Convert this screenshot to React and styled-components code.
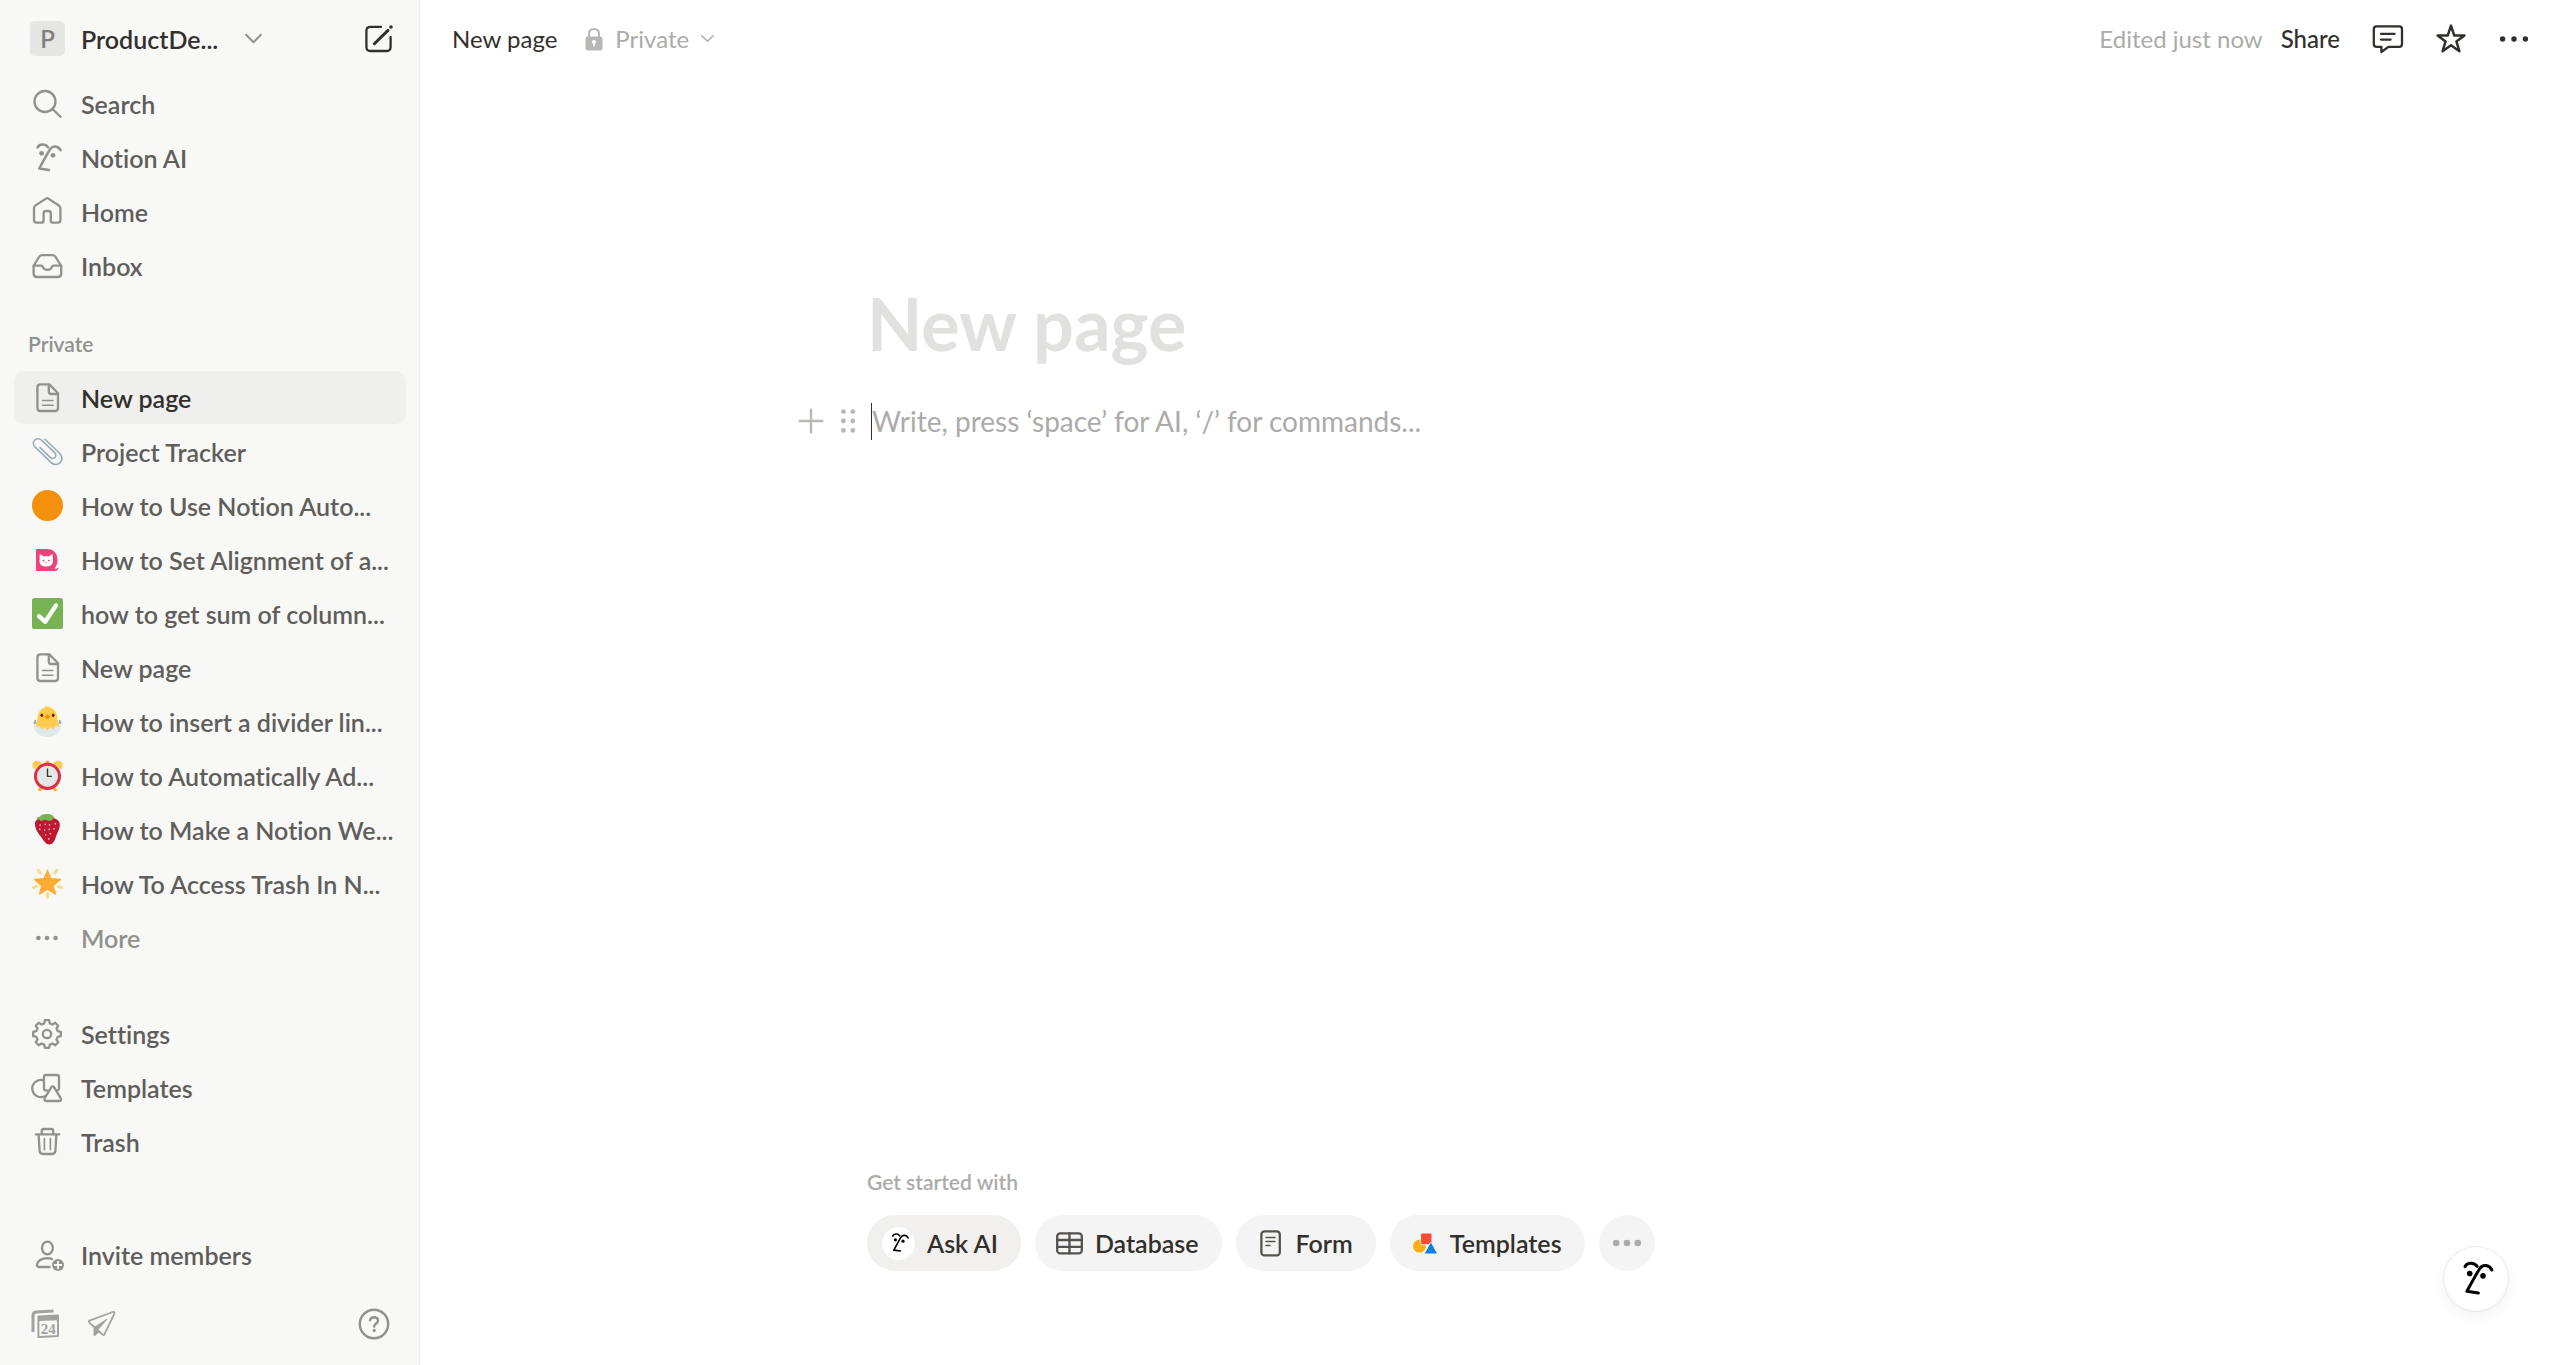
// App.jsx
import React, { useState } from 'react';
import styled, { createGlobalStyle } from 'styled-components';

const GlobalStyle = createGlobalStyle`
  * {
    box-sizing: border-box;
  }

  body {
    margin: 0;
    background: #ffffff;
    color: #32302c;
    font-family: Lato, 'Open Sans', sans-serif;
    font-size: 25px;
    font-variant-ligatures: none;
  }

  button,
  input {
    font: inherit;
    color: inherit;
  }
`;

const Layout = styled.div`
  display: flex;
  min-height: 100vh;
`;

const Sidebar = styled.aside`
  display: flex;
  flex-direction: column;
  flex: 0 0 420px;
  min-width: 0;
  background: #f8f8f7;
  border-right: 1px solid #eeeeec;
`;

const SidebarHeader = styled.div`
  display: flex;
  align-items: center;
  justify-content: space-between;
  height: 77px;
  padding: 0 22px 0 30px;
`;

const WorkspaceButton = styled.button`
  display: flex;
  align-items: center;
  padding: 0;
  border: none;
  background: none;
  font-weight: 600;
  cursor: pointer;
`;

const WorkspaceName = styled.span`
  margin-right: 17px;
`;

const WorkspaceBadge = styled.span`
  width: 35px;
  height: 35px;
  margin-right: 16px;
  border-radius: 5px;
  background: #e6e6e4;
  color: #80807d;
  font-size: 24px;
  line-height: 36px;
  text-align: center;
`;

const IconButton = styled.button`
  display: flex;
  padding: 0;
  border: none;
  background: none;
  color: ${(props) => props.$color || '#32302c'};
  cursor: pointer;
`;

const Section = styled.ul`
  display: flex;
  flex-direction: column;
  gap: 1px;
  margin: ${(props) => props.$margin || '0'};
  padding: 0 13px 0 14px;
  list-style: none;
`;

const SidebarLink = styled.a`
  display: flex;
  align-items: center;
  gap: 16px;
  height: 53px;
  padding: 0 10px 0 15px;
  border-radius: 10px;
  background: ${(props) => (props.$active ? '#efefee' : 'transparent')};
  color: ${(props) => (props.$active ? '#32302c' : props.$muted ? '#91918e' : '#5f5e5b')};
  font-weight: 600;
  text-decoration: none;
  white-space: nowrap;
`;

const IconSlot = styled.span`
  display: flex;
  align-items: center;
  justify-content: center;
  flex: 0 0 36px;
  height: 36px;
  color: #91918e;
`;

const SectionLabel = styled.h2`
  margin: 31px 0 6px;
  padding-left: 28px;
  color: #91918e;
  font-size: 21px;
  font-weight: 600;
  line-height: 42px;
`;

const SidebarBottom = styled.div`
  margin-top: auto;
`;

const SidebarFooter = styled.div`
  display: flex;
  align-items: center;
  gap: 19px;
  height: 82px;
  padding: 0 27px 0 29px;
`;

const Spacer = styled.span`
  flex: 1;
`;

const Main = styled.main`
  display: flex;
  flex-direction: column;
  flex: 1;
  min-width: 0;
`;

const TopBar = styled.header`
  display: flex;
  align-items: center;
  justify-content: space-between;
  height: 77px;
  padding: 0 29px 0 32px;
  font-size: 24px;
`;

const TopBarGroup = styled.div`
  display: flex;
  align-items: center;
  gap: ${(props) => props.$gap};
`;

const TextButton = styled.button`
  display: flex;
  align-items: center;
  gap: 12px;
  padding: 0;
  border: none;
  background: none;
  color: ${(props) => (props.$muted ? '#acaba9' : '#32302c')};
  font-weight: ${(props) => props.$weight || 400};
  cursor: pointer;
`;

const EditedLabel = styled.span`
  color: #acaba9;
`;

const ShareGroup = styled(TopBarGroup)`
  margin-right: 3px;
`;

const Column = styled.div`
  width: 100%;
  max-width: 1247px;
  margin: ${(props) => (props.$bottom ? 'auto auto 0' : '0 auto')};
  padding: ${(props) => (props.$bottom ? '0 0 94px' : '202px 0 0')};
`;

const Title = styled.h1`
  margin: 0 0 33px;
  color: #e1e1df;
  font-size: 72px;
  font-weight: 700;
  line-height: 88px;
`;

const Block = styled.div`
  position: relative;
  display: flex;
  align-items: center;
  height: 42px;
  padding-left: 4px;
`;

const BlockHandles = styled.div`
  position: absolute;
  right: 100%;
  display: flex;
  gap: 1px;
  padding-right: 1px;
`;

const Caret = styled.span`
  width: 1px;
  height: 37px;
  background: #32302c;
`;

const BlockInput = styled.input`
  flex: 1;
  min-width: 0;
  padding: 0;
  border: none;
  outline: none;
  background: none;
  font-size: 28px;
  line-height: 42px;

  &::placeholder {
    color: #acaba9;
    opacity: 1;
  }
`;

const StarterLabel = styled.p`
  margin: 0 0 20px;
  color: #acaba9;
  font-size: 21px;
  font-weight: 600;
  line-height: 26px;
`;

const PillRow = styled.div`
  display: flex;
  flex-wrap: wrap;
  gap: 14px;
`;

const Pill = styled.button`
  display: flex;
  align-items: center;
  gap: 12px;
  height: 56px;
  padding: ${(props) => (props.$ai ? '0 23px 0 15px' : '0 23px 0 21px')};
  border: none;
  border-radius: 28px;
  background: ${(props) => (props.$ai ? '#f1f0ee' : '#f4f4f4')};
  font-weight: 600;
  cursor: pointer;
`;

const RoundPill = styled(Pill)`
  justify-content: center;
  width: 56px;
  padding: 0;
  color: #acaba9;
`;

const AiBadge = styled.span`
  display: flex;
  align-items: center;
  justify-content: center;
  width: 33px;
  height: 33px;
  border-radius: 50%;
  background: #ffffff;
  color: #000000;
`;

const AiButton = styled.button`
  position: fixed;
  right: 53px;
  bottom: 54px;
  display: flex;
  align-items: center;
  justify-content: center;
  width: 64px;
  height: 64px;
  padding: 0;
  border: none;
  border-radius: 50%;
  background: #ffffff;
  color: #000000;
  box-shadow: 0 0 0 1px rgba(0, 0, 0, 0.07), 0 4px 14px rgba(0, 0, 0, 0.06);
  cursor: pointer;
`;

const Svg = styled.svg`
  display: block;
  flex: none;
  fill: none;
  stroke: currentColor;
  stroke-width: ${(props) => props.$stroke || 2.3};
  stroke-linecap: round;
  stroke-linejoin: round;
`;

const Picture = styled.svg`
  display: block;
  flex: none;
`;

const Icon = ({ size = 36, stroke, box = 36, children }) => (
  <Svg width={size} height={size} viewBox={`0 0 ${box} ${box}`} $stroke={stroke} aria-hidden="true">
    {children}
  </Svg>
);

const Emoji = ({ children, size = 31 }) => (
  <Picture width={size} height={size} viewBox="0 0 36 36" aria-hidden="true">
    {children}
  </Picture>
);

const SearchIcon = () => (
  <Icon>
    <circle cx="16" cy="15.5" r="10.5" />
    <path d="M23.7 23.2 31.5 30.8" />
  </Icon>
);

const FaceIcon = ({ size, stroke = 2.5 }) => (
  <Icon size={size} stroke={stroke}>
    <path d="M8.6 7.4C10 4.2 15.8 3 19 7.2" />
    <path d="M31.6 10.2C29 5.6 24 5.4 21.4 8.8 18.6 13 13.8 22 10.2 28.6L20 30" />
    <circle cx="12.6" cy="13.3" r="2.4" fill="currentColor" stroke="none" />
    <circle cx="24" cy="15.3" r="2.4" fill="currentColor" stroke="none" />
  </Icon>
);

const HomeIcon = () => (
  <Icon>
    <path d="M17 4.6 6.6 11.4Q5 12.4 5 14.4V26Q5 28.6 7.6 28.6H12.4Q14.6 28.6 14.6 26.4V19.6Q14.6 17 17 17H19.4Q21.8 17 21.8 19.6V26.4Q21.8 28.6 24 28.6H28.8Q31.4 28.6 31.4 26V14.4Q31.4 12.4 29.8 11.4L19.4 4.6Q18.2 3.8 17 4.6Z" />
  </Icon>
);

const InboxIcon = () => (
  <Icon>
    <path d="M4.6 18 10 9Q11.2 7.2 13.2 7.2H23.4Q25.4 7.2 26.6 9L32.2 18V25.4Q32.2 29 28.6 29H8.2Q4.6 29 4.6 25.4Z" />
    <path d="M4.6 17.6H12Q13.6 17.6 14 19.2 15 21.8 18.4 21.8 21.8 21.8 22.8 19.2 23.2 17.6 24.8 17.6H32.2" />
  </Icon>
);

const PageIcon = () => (
  <Icon>
    <path d="M11.4 4.4H20.4L29 13.2V28Q29 31 26 31H11.4Q8.4 31 8.4 28V7.4Q8.4 4.4 11.4 4.4Z" />
    <path d="M19.8 4.8V11.8Q19.8 14 22 14H28.6" />
    <path d="M13.4 20.4H24M13.4 25.2H24" strokeWidth="1.5" />
  </Icon>
);

const DotsIcon = ({ size, r = 2.3, spread = 8.6 }) => (
  <Icon size={size}>
    <g fill="currentColor" stroke="none">
      <circle cx={18 - spread} cy="18" r={r} />
      <circle cx="18" cy="18" r={r} />
      <circle cx={18 + spread} cy="18" r={r} />
    </g>
  </Icon>
);

// eight teeth, two points on the tip and two in the gap for each
const gearPath = () => {
  const points = [];
  for (let i = 0; i < 8; i += 1) {
    const mid = (i * Math.PI) / 4;
    [[-0.26, 11], [-0.15, 14], [0.15, 14], [0.26, 11]].forEach(([offset, radius]) => {
      const angle = mid + offset;
      points.push(`${(18 + radius * Math.sin(angle)).toFixed(2)} ${(18 - radius * Math.cos(angle)).toFixed(2)}`);
    });
  }
  return `M${points.join('L')}Z`;
};

const SettingsIcon = () => (
  <Icon>
    <path d={gearPath()} />
    <circle cx="18" cy="18" r="4.2" />
  </Icon>
);

const TemplatesIcon = () => (
  <Icon>
    <path d="M14 10.2A8.6 8.6 0 1 0 16.8 25.6" />
    <path d="M18.4 20.4H17Q15 20.4 15 18.4V7Q15 5 17 5H28Q30 5 30 7V18.4Q30 19.8 28.8 20.2" />
    <path d="M22.4 17.2 15.6 28.4Q14.8 30.8 17 31H30.4Q32.8 30.8 31.8 28.4L25 17.2Q23.7 15.4 22.4 17.2Z" />
  </Icon>
);

const TrashIcon = () => (
  <Icon>
    <path d="M6.8 10.4H30.2" />
    <path d="M12.8 10V7Q12.8 5 14.8 5H22.2Q24.2 5 24.2 7V10" />
    <path d="M9.6 10.6 10.6 26.8Q10.8 30 14 30H23Q26.2 30 26.4 26.8L27.4 10.6" />
    <path d="M15.4 14.6V25.6M21.4 14.6V25.6" strokeWidth="1.7" />
  </Icon>
);

const InviteIcon = () => (
  <Icon>
    <ellipse cx="18.4" cy="11" rx="5.4" ry="6.4" />
    <path d="M20.6 30H10Q7.6 30 8 27.4 10 21.4 18.4 21.2 21 21.2 23 22" />
    <circle cx="29" cy="28" r="6" fill="currentColor" stroke="none" />
    <path d="M29 24.6V31.4M25.6 28H32.4" stroke="#f8f8f7" strokeWidth="1.8" />
  </Icon>
);

const CalendarIcon = () => (
  <Icon>
    <path d="M4 26V9.6Q4 6.4 7.2 6L24.6 5" strokeWidth="3" strokeLinecap="butt" />
    <path d="M9.4 10.6 29 9.6V30L9.4 31Z" strokeWidth="2" />
    <path d="M9 10.6 29.4 9.4V14.2L9 15Z" fill="currentColor" stroke="none" />
    <text
      x="19.2"
      y="27.6"
      fill="currentColor"
      stroke="none"
      fontFamily="Liberation Serif, serif"
      fontSize="15"
      fontWeight="700"
      textAnchor="middle"
    >
      24
    </text>
  </Icon>
);

const SendIcon = () => (
  <Icon stroke="1.8">
    <path d="M5.4 14.6 28.8 6Q31 5.4 30.4 7.6L20.4 28.4Q19.8 29.8 18.6 28.6L14.8 25 10.6 29V21.2L5.2 16.6Q4.4 15.2 5.4 14.6Z" />
    <path d="M10.6 21.2 23 13.2 14.2 23.4V25L10.6 29Z" fill="currentColor" strokeWidth="1" />
  </Icon>
);

const HelpIcon = () => (
  <Icon stroke="2.4">
    <circle cx="18" cy="18" r="14.2" />
    <path d="M14 14.4Q14.4 11.2 18.2 11.2 22 11.4 22 14.6 22 16.4 20 17.6 18.2 18.6 18.2 20.6" />
    <circle cx="18.2" cy="24.4" r="1.6" fill="currentColor" stroke="none" />
  </Icon>
);

const ComposeIcon = () => (
  <Icon>
    <path d="M20 5.8H9.4Q5.4 5.8 5.4 9.8V26Q5.4 30 9.4 30H25.6Q29.6 30 29.6 26V16" />
    <path d="M13.4 22.8 27 9.4" strokeWidth="3" />
    <circle cx="30" cy="6" r="1.8" fill="currentColor" stroke="none" />
  </Icon>
);

const ChevronIcon = ({ size = 17 }) => (
  <Icon size={size} box={16} stroke="1.8">
    <path d="M1 4.5 8 11.5 15 4.5" />
  </Icon>
);

const LockIcon = () => (
  <Picture width="18" height="24" viewBox="0 0 18 24" aria-hidden="true">
    <path d="M4 11V7Q4 2 9 2 14 2 14 7V11" fill="none" stroke="#b8b7b4" strokeWidth="2" />
    <rect x="0.5" y="9.5" width="17" height="14" rx="2.5" fill="#b8b7b4" />
    <circle cx="9" cy="15" r="2" fill="#ffffff" />
    <rect x="8.2" y="15" width="1.6" height="4.6" rx="0.8" fill="#ffffff" />
  </Picture>
);

const CommentIcon = () => (
  <Icon>
    <path d="M6.4 5.4H29.2Q32 5.4 32 8.2V23Q32 25.8 29.2 25.8H18.4L11.4 31V25.8H6.6Q3.8 25.8 3.8 23V8.2Q3.8 5.4 6.4 5.4Z" />
    <path d="M11 12.8H24.6M11 18.6H20.6" />
  </Icon>
);

const StarIcon = () => (
  <Icon stroke="2.5">
    <path d="M18 4.6 21.2 14.4H31.4L23.4 20.4 26.4 30.2 18 24.2 9.6 30.2 12.6 20.4 4.6 14.4H14.8Z" />
  </Icon>
);

const PlusIcon = () => (
  <Icon stroke="2.4">
    <path d="M18 6.8V29.2M6.8 18H29.2" />
  </Icon>
);

const DragIcon = () => (
  <Icon>
    <g fill="currentColor" stroke="none">
      {[8.6, 18, 27.4].map((y) => (
        <React.Fragment key={y}>
          <circle cx="13.4" cy={y} r="2.4" />
          <circle cx="22.8" cy={y} r="2.4" />
        </React.Fragment>
      ))}
    </g>
  </Icon>
);

const PaperclipIcon = () => (
  <Icon stroke="1.6">
    <path
      d="M16 5.2 31 19.8C33.6 22.8 33.4 26.6 31 28.8 28.8 31 25 31 22.6 28.8L6 13C4 11 3.8 8 5.6 6.2 7.4 4.2 10.6 4.2 12.6 6.2L25.6 18.6C27 20 27.2 22.2 26 23.4 24.8 24.8 22.6 24.8 21.2 23.4L11 13.6"
      stroke="#99aab5"
    />
  </Icon>
);

const OrangeIcon = () => (
  <Emoji>
    <circle cx="18" cy="18" r="18" fill="#f4900c" />
  </Emoji>
);

const CatIcon = () => (
  <Picture width="24" height="24" viewBox="0 0 24 24" aria-hidden="true">
    <path d="M2 1H12C18.5 1 22.5 5.5 22.5 12 22.5 15.5 21.5 18 19.7 20 21 21.4 22 21 23.3 19.6 23.7 21.6 22 23 20 23H2Q1 23 1 22V2Q1 1 2 1Z" fill="#f0427a" />
    <path d="M4.8 6 8.8 8.4Q11 7.8 13.4 8.4L17.6 6 18 13.4Q17.4 18.4 11.2 18.6 5 18.4 4.4 13.4Z" fill="#ffffff" />
    <circle cx="8.4" cy="12.6" r="0.9" fill="#f0427a" />
    <circle cx="14" cy="12.6" r="0.9" fill="#f0427a" />
    <path d="M10.2 14.4H12.2L11.2 15.6Z" fill="#f0427a" />
  </Picture>
);

const CheckIcon = () => (
  <Emoji>
    <rect width="36" height="36" rx="3" fill="#77b255" />
    <path
      d="M29.28 6.362c-1.156-.751-2.704-.422-3.458.736L14.936 23.877l-5.029-4.65c-1.014-.938-2.596-.875-3.533.138-.937 1.014-.875 2.596.139 3.533l7.209 6.666c.48.445 1.09.665 1.696.665.673 0 1.534-.282 2.099-1.139.332-.506 12.5-19.27 12.5-19.27.751-1.159.421-2.707-.737-3.458z"
      fill="#ffffff"
    />
  </Emoji>
);

const ChickIcon = () => (
  <Emoji>
    <path d="M2 21Q1.6 16.6 4.6 16L6 26H30L31.4 16Q34.4 16.6 34 21Z" fill="#99aab5" />
    <path d="M18 1C15.6 -0.4 14.6 0.6 15.6 1.8 9.6 3 7 8 6.6 13.6 6 17 5 20 5 23 5 29 10 31 18 31S31 29 31 23C31 20 30 17 29.4 13.6 29 8 26.4 3 20.6 1.8 21.6 0.2 19.6 -0.2 18 1Z" fill="#ffcc4d" />
    <path d="M2 20 5.6 24.6 8.4 22.6 11.4 27.6 14.4 24.4 18 28.4 21.6 24.4 24.6 27.6 27.6 22.6 30.4 24.6 34 20C34.4 29.6 28 36 18 36S1.6 29.6 2 20Z" fill="#e1e8ed" />
    <ellipse cx="11.4" cy="10.8" rx="1.6" ry="2" fill="#662113" />
    <ellipse cx="24.6" cy="10.8" rx="1.6" ry="2" fill="#662113" />
    <path d="M18 10Q21.4 11.2 21 13.2 20 15.2 18 15.2T15 13.2Q14.6 11.2 18 10Z" fill="#f4900c" />
  </Emoji>
);

const ClockIcon = () => (
  <Emoji>
    <path d="M18 0.5Q20.5 0.5 20.5 4H15.5Q15.5 0.5 18 0.5Z" fill="#ffac33" />
    <path d="M8 32 7 36H10.5L12 33ZM28 32 29 36H25.5L24 33Z" fill="#ffac33" />
    <path d="M1.8 10.6C-1 6 0.6 1 5 1 8.4 0.8 10.8 2.6 11.4 4.4ZM34.2 10.6C37 6 35.4 1 31 1 27.6 0.8 25.2 2.6 24.6 4.4Z" fill="#ffcc4d" />
    <circle cx="18" cy="19" r="14" fill="#e6e7e8" stroke="#dd2e44" strokeWidth="3.4" />
    <path d="M18 10V19H23" fill="none" stroke="#31373d" strokeWidth="1.6" />
  </Emoji>
);

const StrawberryIcon = () => (
  <Emoji>
    <path d="M3.4 12C3.4 6 9 4 16 5.4 24 2.6 32.6 6 32.4 13 32.2 18 29 22 27.6 27 26 32.6 23.6 35.6 20 35.4 15.4 35 13.6 30.6 10.4 26.4 7 22.4 3.6 17.6 3.4 12Z" fill="#be1931" />
    <path d="M17 0C13 0 10 1 9.4 3.2 6.4 3 5 4.4 6 6.6 8 6 9 6.6 9.6 8 12 8.4 13.6 7.4 15 6.8 18 8.4 22 8.4 24 6.6 23.2 5.6 24 5 26.4 4.8 24.6 1.2 20.6 -0.2 17 0Z" fill="#77b255" />
    <g fill="#f4abba">
      <circle cx="9.4" cy="12.8" r="1" />
      <circle cx="9" cy="17.6" r="1" />
      <circle cx="15.4" cy="12" r="1" />
      <circle cx="20.4" cy="12.6" r="1" />
      <circle cx="27.2" cy="11.2" r="1" />
      <circle cx="25.6" cy="17.2" r="1" />
      <circle cx="20" cy="17.8" r="1" />
      <circle cx="14.8" cy="18.6" r="1" />
      <circle cx="21.4" cy="22.8" r="1" />
      <circle cx="15.8" cy="24.2" r="1" />
      <circle cx="19.4" cy="29" r="1" />
    </g>
  </Emoji>
);

const SunStarIcon = () => (
  <Emoji>
    <g fill="#ffd983">
      <ellipse cx="8.6" cy="4.4" rx="1.8" ry="4" transform="rotate(-36 8.6 4.4)" />
      <ellipse cx="27.4" cy="4.4" rx="1.8" ry="4" transform="rotate(36 27.4 4.4)" />
      <ellipse cx="3.6" cy="22" rx="1.8" ry="4" transform="rotate(72 3.6 22)" />
      <ellipse cx="32.4" cy="22" rx="1.8" ry="4" transform="rotate(-72 32.4 22)" />
      <ellipse cx="18" cy="32" rx="1.8" ry="4" />
    </g>
    <path
      d="M18 1 22.4 11.6 33.4 12.4Q34.4 12.8 33.6 13.8L25.4 21 28 30Q28 31.4 26.6 30.8L18 25.6 9.4 30.8Q8 31.4 8 30L10.6 21 2.4 13.8Q1.6 12.8 2.6 12.4L13.6 11.6Z"
      fill="#ffac33"
    />
  </Emoji>
);

const DatabaseIcon = () => (
  <Icon size={27} box={27}>
    <g stroke="#55534e">
      <rect x="1.2" y="3.4" width="24.6" height="20" rx="3" />
      <path d="M1 10H26M1 16.8H26M13.5 3.4V23.4" />
    </g>
  </Icon>
);

const FormIcon = () => (
  <Icon size={27} box={27}>
    <g stroke="#55534e">
      <rect x="4.4" y="1.4" width="18.4" height="24" rx="3" />
      <path d="M9 7.4H18M9 11.4H18M9 15.4H13" strokeWidth="1.5" />
    </g>
  </Icon>
);

const ShapesIcon = () => (
  <Picture width="27" height="27" viewBox="0 0 27 27" aria-hidden="true">
    <circle cx="8.4" cy="16.2" r="6.4" fill="#fdae13" />
    <rect x="9.6" y="3" width="11.4" height="11.8" rx="1.5" fill="#fb4a34" stroke="#f4f4f4" strokeWidth="1" />
    <path d="M20.6 12.8 26 22.6Q26.4 24 25 24H14.6Q13.2 24 13.8 22.6L19 13.2Q19.8 12 20.6 12.8Z" fill="#0d7fe8" stroke="#f4f4f4" strokeWidth="1" />
  </Picture>
);

const navItems = [
  { label: 'Search', icon: <SearchIcon /> },
  { label: 'Notion AI', icon: <FaceIcon /> },
  { label: 'Home', icon: <HomeIcon /> },
  { label: 'Inbox', icon: <InboxIcon /> },
];

const pages = [
  { label: 'New page', icon: <PageIcon />, active: true },
  { label: 'Project Tracker', icon: <PaperclipIcon /> },
  { label: 'How to Use Notion Auto...', icon: <OrangeIcon /> },
  { label: 'How to Set Alignment of a...', icon: <CatIcon /> },
  { label: 'how to get sum of column...', icon: <CheckIcon /> },
  { label: 'New page', icon: <PageIcon /> },
  { label: 'How to insert a divider lin...', icon: <ChickIcon /> },
  { label: 'How to Automatically Ad...', icon: <ClockIcon /> },
  { label: 'How to Make a Notion We...', icon: <StrawberryIcon /> },
  { label: 'How To Access Trash In N...', icon: <SunStarIcon /> },
  { label: 'More', icon: <DotsIcon r={2.3} />, muted: true },
];

const tools = [
  { label: 'Settings', icon: <SettingsIcon /> },
  { label: 'Templates', icon: <TemplatesIcon /> },
  { label: 'Trash', icon: <TrashIcon /> },
];

const inviteItems = [{ label: 'Invite members', icon: <InviteIcon /> }];

const LinkList = ({ items, margin }) => (
  <Section $margin={margin}>
    {items.map((item, index) => (
      <li key={index}>
        <SidebarLink href="#" $active={item.active} $muted={item.muted}>
          <IconSlot>{item.icon}</IconSlot>
          {item.label}
        </SidebarLink>
      </li>
    ))}
  </Section>
);

const App = () => {
  const [text, setText] = useState('');

  return (
    <Layout>
      <GlobalStyle />
      <Sidebar>
        <SidebarHeader>
          <WorkspaceButton type="button">
            <WorkspaceBadge>P</WorkspaceBadge>
            <WorkspaceName>ProductDe...</WorkspaceName>
            <IconSlot>
              <ChevronIcon />
            </IconSlot>
          </WorkspaceButton>
          <IconButton type="button" aria-label="Create a new page">
            <ComposeIcon />
          </IconButton>
        </SidebarHeader>

        <nav>
          <LinkList items={navItems} />
          <SectionLabel>Private</SectionLabel>
          <LinkList items={pages} />
          <LinkList items={tools} margin="43px 0 0" />
        </nav>

        <SidebarBottom>
          <LinkList items={inviteItems} margin="0 0 2px" />
          <SidebarFooter>
            <IconButton type="button" $color="#a3a29f" aria-label="Calendar">
              <CalendarIcon />
            </IconButton>
            <IconButton type="button" $color="#a3a29f" aria-label="Mail">
              <SendIcon />
            </IconButton>
            <Spacer />
            <IconButton type="button" $color="#91918e" aria-label="Help">
              <HelpIcon />
            </IconButton>
          </SidebarFooter>
        </SidebarBottom>
      </Sidebar>

      <Main>
        <TopBar>
          <TopBarGroup $gap="28px">
            <TextButton type="button">New page</TextButton>
            <TextButton type="button" $muted>
              <LockIcon />
              Private
              <ChevronIcon size={13} />
            </TextButton>
          </TopBarGroup>
          <TopBarGroup $gap="27px">
            <ShareGroup $gap="18px">
              <EditedLabel>Edited just now</EditedLabel>
              <TextButton type="button" $weight={500}>
                Share
              </TextButton>
            </ShareGroup>
            <IconButton type="button" aria-label="Comments">
              <CommentIcon />
            </IconButton>
            <IconButton type="button" aria-label="Favorite">
              <StarIcon />
            </IconButton>
            <IconButton type="button" aria-label="More actions">
              <DotsIcon r={2.7} spread={11.4} />
            </IconButton>
          </TopBarGroup>
        </TopBar>

        <Column>
          <Title>New page</Title>
          <Block>
            <BlockHandles>
              <IconButton type="button" $color="#b8b7b4" aria-label="Add block">
                <PlusIcon />
              </IconButton>
              <IconButton type="button" $color="#b8b7b4" aria-label="Drag block">
                <DragIcon />
              </IconButton>
            </BlockHandles>
            <Caret />
            <BlockInput
              type="text"
              aria-label="Page content"
              placeholder="Write, press ‘space’ for AI, ‘/’ for commands..."
              value={text}
              onChange={(e) => setText(e.target.value)}
            />
          </Block>
        </Column>

        <Column $bottom>
          <StarterLabel>Get started with</StarterLabel>
          <PillRow>
            <Pill type="button" $ai>
              <AiBadge>
                <FaceIcon size={24} />
              </AiBadge>
              Ask AI
            </Pill>
            <Pill type="button">
              <DatabaseIcon />
              Database
            </Pill>
            <Pill type="button">
              <FormIcon />
              Form
            </Pill>
            <Pill type="button">
              <ShapesIcon />
              Templates
            </Pill>
            <RoundPill type="button" aria-label="More options">
              <DotsIcon r={3.3} spread={10.8} />
            </RoundPill>
          </PillRow>
        </Column>
      </Main>

      <AiButton type="button" aria-label="Open Notion AI">
        <FaceIcon size={42} stroke={2.6} />
      </AiButton>
    </Layout>
  );
};

export default App;
